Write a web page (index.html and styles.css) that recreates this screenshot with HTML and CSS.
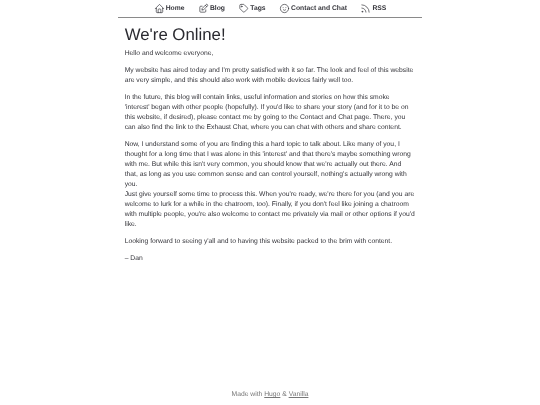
FILE: index.html
```html
<!DOCTYPE html>
<html lang="en">
<head>
<meta charset="utf-8">
<title>We're Online!</title>
<link rel="stylesheet" href="styles.css">
</head>
<body>
<div class="page">
  <nav class="nav">
    <a class="nav-item" href="#"><svg class="icon" viewBox="0 0 24 24"><path d="M5 12H3l9-9 9 9h-2M5 12v7a2 2 0 0 0 2 2h10a2 2 0 0 0 2-2v-7"/><path d="M9 21v-6a2 2 0 0 1 2-2h2a2 2 0 0 1 2 2v6"/></svg><span>Home</span></a>
    <a class="nav-item" href="#"><svg class="icon" viewBox="0 0 24 24"><path d="M9 7H6a2 2 0 0 0-2 2v9a2 2 0 0 0 2 2h9a2 2 0 0 0 2-2v-3"/><path d="M9 15h3l8.5-8.5a2.1 2.1 0 0 0-3-3L9 12v3"/><path d="M16 5l3 3"/></svg><span>Blog</span></a>
    <a class="nav-item" href="#"><svg class="icon" viewBox="0 0 24 24"><path d="M7.5 3h4.6a2 2 0 0 1 1.4.6l6.9 6.9a2 2 0 0 1 0 2.8l-6.2 6.2a2 2 0 0 1-2.8 0l-6.9-6.9a2 2 0 0 1-.5-1.4V5a2 2 0 0 1 2-2z"/><circle cx="8" cy="7.5" r="1"/></svg><span>Tags</span></a>
    <a class="nav-item" href="#"><svg class="icon" viewBox="0 0 24 24"><circle cx="12" cy="12" r="9"/><path d="M9 10h.01M15 10h.01M9.5 15a3.5 3.5 0 0 0 5 0"/></svg><span>Contact and Chat</span></a>
    <a class="nav-item" href="#"><svg class="icon" viewBox="0 0 24 24"><circle cx="5" cy="19" r="1"/><path d="M4 4a16 16 0 0 1 16 16"/><path d="M4 11a9 9 0 0 1 9 9"/></svg><span>RSS</span></a>
  </nav>
  <main class="content">
    <h1 class="title">We're Online!</h1>
    <p>Hello and welcome everyone,</p>
    <p>My website has aired today and I'm pretty satisfied with it so far. The look and feel of this website are very simple, and this should also work with mobile devices fairly well too.</p>
    <p>In the future, this blog will contain links, useful information and stories on how this smoke 'interest' began with other people (hopefully). If you'd like to share your story (and for it to be on this website, if desired), please contact me by going to the Contact and Chat page. There, you can also find the link to the Exhaust Chat, where you can chat with others and share content.</p>
    <p>Now, I understand some of you are finding this a hard topic to talk about. Like many of you, I thought for a long time that I was alone in this 'interest' and that there's maybe something wrong with me. But while this isn't very common, you should know that we're actually out there. And that, as long as you use common sense and can control yourself, nothing's actually wrong with you.<br>Just give yourself some time to process this. When you're ready, we're there for you (and you are welcome to lurk for a while in the chatroom, too). Finally, if you don't feel like joining a chatroom with multiple people, you're also welcome to contact me privately via mail or other options if you'd like.</p>
    <p>Looking forward to seeing y'all and to having this website packed to the brim with content.</p>
    <p>– Dan</p>
  </main>
  <footer class="footer">Made with <a href="#">Hugo</a> &amp; <a href="#">Vanilla</a></footer>
</div>
</body>
</html>
```
FILE: styles.css
```css
* { box-sizing: border-box; }
html, body { margin: 0; height: 100%; }
body { background: #fff; color: #34343a; font-family: "Liberation Sans", Arial, sans-serif; font-size: 6.75px; line-height: 10.08px; text-rendering: geometricPrecision; }
.page { width: 304px; height: 405px; margin: 0 auto; display: flex; flex-direction: column; will-change: transform; }
.nav { height: 18px; display: flex; justify-content: center; align-items: center; gap: 13.44px; border-bottom: 1px solid #8a8a8a; font-weight: 700; }
.nav-item { display: flex; align-items: center; gap: 1px; color: #34343a; text-decoration: none; }
.nav-item span { padding-top: 1px; }
.icon { width: 11px; height: 11px; fill: none; stroke: #34343a; stroke-width: 1.5; stroke-linecap: round; stroke-linejoin: round; }
.content { flex: 1; padding: 0 6.72px; }
.title { margin: 7px 0 5px; font-size: 16.8px; line-height: 19px; font-weight: 400; color: #2a2a30; }
.content p { margin: 0 0 6.72px; }
.footer { height: 15px; text-align: center; color: #777; }
.footer a { color: #777; }
```
